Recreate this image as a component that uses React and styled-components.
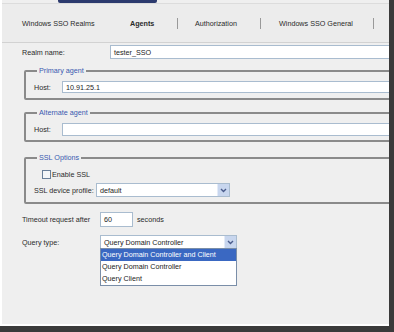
import styled, { createGlobalStyle } from 'styled-components';

const Global = createGlobalStyle`
  html, body {
    margin: 0;
    padding: 0;
    background: #ffffff;
  }
  * {
    box-sizing: border-box;
  }
`;

const Frame = styled.div`
  width: 394px;
  height: 332px;
  border-right: 5px solid #3a3a3a;
  border-bottom: 6px solid #3a3a3a;
  background: #ffffff;
  font-family: "Liberation Sans", Arial, sans-serif;
  font-size: 7.2px;
  color: #2a2a2a;
  overflow: hidden;
`;

const Panel = styled.div`
  width: 387px;
  height: 324px;
  margin-left: 2px;
  background: #efefef;
  overflow: hidden;
  display: flex;
  flex-direction: column;
`;

const TopAccent = styled.div`
  margin-left: 56px;
  width: 99px;
  height: 3px;
  background: #2c3a6e;
  border-radius: 0 0 2px 2px;
`;

const TabStrip = styled.div`
  height: 40px;
  display: flex;
  align-items: center;
  padding-left: 20px;
  border-top: 1px solid #dcdcdc;
  border-bottom: 1px solid #d2d2d2;
  background: #ececec;
`;

const Tab = styled.span`
  width: ${p => p.$w}px;
  font-weight: ${p => (p.$active ? 'bold' : 'normal')};
  white-space: nowrap;
`;

const Sep = styled.span`
  width: 1px;
  height: 11px;
  background: #999;
  margin-right: ${p => p.$mr}px;
`;

const Body = styled.div`
  padding: 2px 0 0 20px;
  display: flex;
  flex-direction: column;
`;

const Row = styled.div`
  display: flex;
  align-items: center;
  height: 14px;
  margin-top: ${p => p.$mt || 0}px;
  position: relative;
`;

const Label = styled.span`
  width: ${p => p.$w}px;
  margin-left: ${p => p.$ml || 0}px;
  flex: none;
  white-space: nowrap;
`;

const Input = styled.div`
  width: ${p => p.$w}px;
  height: ${p => p.$h || 14}px;
  flex: none;
  background: #fff;
  border: 1px solid #a9bccf;
  padding-left: 3px;
  display: flex;
  align-items: center;
  white-space: nowrap;
  color: #222;
`;

const Group = styled.fieldset`
  margin: ${p => p.$mt}px 0 0 2px;
  width: 420px;
  height: ${p => p.$h}px;
  padding: 5px 0 0 8px;
  border: 2px solid #8a8a8a;
  border-radius: 2px;
  display: flex;
  flex-direction: column;
`;

const Legend = styled.legend`
  color: #3a5ab0;
  padding: 0 2px;
  margin-left: 3px;
  font-size: 7.2px;
`;

const Check = styled.span`
  width: 9px;
  height: 9px;
  border: 1px solid #6a7f99;
  background: #f4f6f8;
  margin: 0 1px 0 8px;
  flex: none;
`;

const Select = styled.div`
  width: ${p => p.$w}px;
  height: 14px;
  flex: none;
  background: #fff;
  border: 1px solid #a9bccf;
  display: flex;
  align-items: center;
  padding-left: 3px;
  color: #222;
  white-space: nowrap;
`;

const SelectText = styled.span`
  flex: 1;
`;

const Arrow = styled.span`
  width: 12px;
  height: 12px;
  background: #c8d6ee;
  border-left: 1px solid #e4ebf7;
  display: flex;
  align-items: center;
  justify-content: center;
`;

const List = styled.div`
  position: absolute;
  top: 13px;
  left: 78px;
  width: 137px;
  background: #fff;
  border: 1px solid #7a8ea8;
  display: flex;
  flex-direction: column;
  z-index: 2;
`;

const Option = styled.div`
  height: 12px;
  line-height: 12px;
  padding-left: 1px;
  white-space: nowrap;
  background: ${p => (p.$sel ? '#3a68c2' : '#fff')};
  color: ${p => (p.$sel ? '#fff' : '#222')};
`;

const Chevron = () => (
  <svg width="7" height="5" viewBox="0 0 7 5">
    <path d="M1 1 L3.5 3.5 L6 1" stroke="#4a5c8c" strokeWidth="1.4" fill="none" />
  </svg>
);

export default function App() {
  return (
    <Frame>
      <Global />
      <Panel>
        <TopAccent />
        <TabStrip>
          <Tab $w={108}>Windows SSO Realms</Tab>
          <Tab $w={47} $active>Agents</Tab>
          <Sep $mr={17} />
          <Tab $w={65}>Authorization</Tab>
          <Sep $mr={18} />
          <Tab $w={94}>Windows SSO General</Tab>
          <Sep $mr={0} />
        </TabStrip>
        <Body>
          <Row>
            <Label $w={88}>Realm name:</Label>
            <Input $w={300}>tester_SSO</Input>
          </Row>
          <Group $mt={7} $h={34}>
            <Legend>Primary agent</Legend>
            <Row>
              <Label $w={28}>Host:</Label>
              <Input $w={340} $h={12}>10.91.25.1</Input>
            </Row>
          </Group>
          <Group $mt={8} $h={34}>
            <Legend>Alternate agent</Legend>
            <Row>
              <Label $w={28}>Host:</Label>
              <Input $w={340} $h={13} />
            </Row>
          </Group>
          <Group $mt={11} $h={51}>
            <Legend>SSL Options</Legend>
            <Row>
              <Check />
              <span>Enable SSL</span>
            </Row>
            <Row $mt={2}>
              <Label $w={62}>SSL device profile:</Label>
              <Select $w={134}>
                <SelectText>default</SelectText>
                <Arrow><Chevron /></Arrow>
              </Select>
            </Row>
          </Group>
          <Row $mt={8}>
            <Label $w={78}>Timeout request after</Label>
            <Input $w={33} $h={15}>60</Input>
            <Label $w={60} $ml={4}>seconds</Label>
          </Row>
          <Row $mt={9}>
            <Label $w={78}>Query type:</Label>
            <Select $w={137}>
              <SelectText>Query Domain Controller</SelectText>
              <Arrow><Chevron /></Arrow>
            </Select>
            <List>
              <Option $sel>Query Domain Controller and Client</Option>
              <Option>Query Domain Controller</Option>
              <Option>Query Client</Option>
            </List>
          </Row>
        </Body>
      </Panel>
    </Frame>
  );
}
